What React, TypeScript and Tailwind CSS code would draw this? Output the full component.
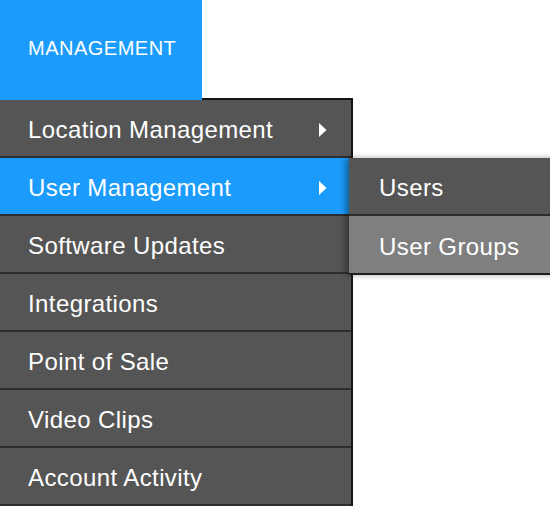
import React from 'react'

const items = [
  { label: 'Location Management', sub: true },
  { label: 'User Management', sub: true, active: true },
  { label: 'Software Updates' },
  { label: 'Integrations' },
  { label: 'Point of Sale' },
  { label: 'Video Clips' },
  { label: 'Account Activity' },
]

function Caret() {
  return (
    <svg width="9" height="16" viewBox="0 0 9 16" className="shrink-0">
      <path d="M1 1 L8.5 8 L1 15 Z" fill="#ffffff" />
    </svg>
  )
}

export default function App() {
  return (
    <div
      className="relative w-[550px] h-[513px] bg-white overflow-hidden text-white"
      style={{ fontFamily: '"Liberation Sans", Arial, sans-serif' }}
    >
      {/* Top nav tab */}
      <div className="relative z-10 w-[202px] h-[100px] bg-[#1b9cfd] flex items-center pl-7 pb-1">
        <span className="text-[20px] tracking-[0.5px] leading-none">MANAGEMENT</span>
      </div>

      {/* Dropdown */}
      <div className="relative w-[353px] -mt-[2px] border-t-2 border-r-2 border-[#151515]">
        {items.map((item) => (
          <div
            key={item.label}
            className={`h-[58px] flex items-center justify-between pl-7 pr-6 pt-1 border-b-2 border-[#2e2e2e] ${
              item.active ? 'bg-[#1b9cfd]' : 'bg-[#555555]'
            }`}
          >
            <span className="text-[24px] tracking-[0.4px] leading-none">{item.label}</span>
            {item.sub && <Caret />}
          </div>
        ))}

        {/* Flyout submenu */}
        <div className="absolute left-[349px] top-[58px] w-[210px] shadow-[-4px_0_6px_rgba(0,0,0,0.35)] border-b-2 border-[#1e1e1e]">
          <div className="h-[58px] flex items-center pl-[30px] pt-1 bg-[#555555] border-b-2 border-[#2e2e2e]">
            <span className="text-[24px] tracking-[0.4px] leading-none">Users</span>
          </div>
          <div className="h-[57px] flex items-center pl-[30px] pt-1 bg-[#7f7f7f]">
            <span className="text-[24px] tracking-[0.4px] leading-none">User Groups</span>
          </div>
        </div>
      </div>
    </div>
  )
}
